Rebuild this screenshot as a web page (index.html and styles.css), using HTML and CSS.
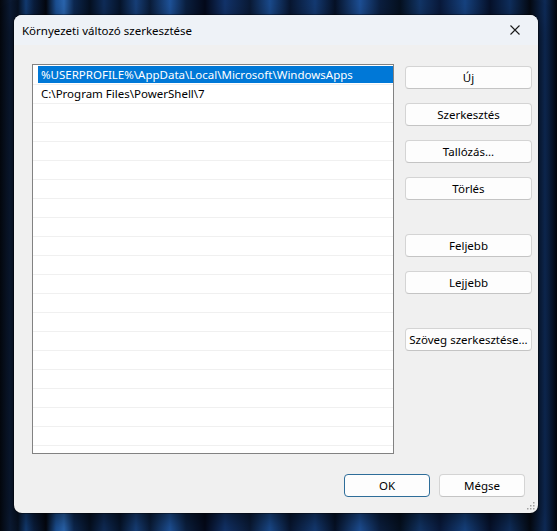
FILE: index.html
```html
<!DOCTYPE html>
<html lang="hu">

<head>
  <meta charset="UTF-8">
  <meta name="viewport" content="width=device-width, initial-scale=1.0">
  <title>Környezeti változó szerkesztése</title>
  <link rel="stylesheet" href="styles.css">
</head>

<body>
  <div class="dialog">
    <header class="titlebar">
      <span class="title">Környezeti változó szerkesztése</span>
      <button class="close" aria-label="Bezárás">
        <svg width="10" height="10" viewBox="0 0 10 10">
          <path d="M0.5 0.5 L9.5 9.5 M9.5 0.5 L0.5 9.5" stroke="#1a1a1a" stroke-width="1.1" fill="none" />
        </svg>
      </button>
    </header>

    <div class="content">
      <div class="main">
        <div class="list">
          <div class="row"><div class="item selected">%USERPROFILE%\AppData\Local\Microsoft\WindowsApps</div></div>
          <div class="row"><div class="item">C:\Program Files\PowerShell\7</div></div>
          <div class="row"></div>
          <div class="row"></div>
          <div class="row"></div>
          <div class="row"></div>
          <div class="row"></div>
          <div class="row"></div>
          <div class="row"></div>
          <div class="row"></div>
          <div class="row"></div>
          <div class="row"></div>
          <div class="row"></div>
          <div class="row"></div>
          <div class="row"></div>
          <div class="row"></div>
          <div class="row"></div>
          <div class="row"></div>
          <div class="row"></div>
          <div class="row"></div>
          <div class="row"></div>
        </div>

        <div class="actions">
          <div class="group">
            <button class="btn">Új</button>
            <button class="btn">Szerkesztés</button>
            <button class="btn">Tallózás...</button>
            <button class="btn">Törlés</button>
          </div>
          <div class="group">
            <button class="btn">Feljebb</button>
            <button class="btn">Lejjebb</button>
          </div>
          <div class="group">
            <button class="btn">Szöveg szerkesztése...</button>
          </div>
        </div>
      </div>

      <footer class="footer">
        <button class="btn btn-wide btn-default">OK</button>
        <button class="btn btn-wide">Mégse</button>
      </footer>
    </div>

    <svg class="grip" width="8" height="8" viewBox="0 0 8 8">
      <rect x="6" y="0" width="1.5" height="1.5" fill="#a0a0a0" />
      <rect x="3" y="3" width="1.5" height="1.5" fill="#a0a0a0" />
      <rect x="6" y="3" width="1.5" height="1.5" fill="#a0a0a0" />
      <rect x="0" y="6" width="1.5" height="1.5" fill="#a0a0a0" />
      <rect x="3" y="6" width="1.5" height="1.5" fill="#a0a0a0" />
      <rect x="6" y="6" width="1.5" height="1.5" fill="#a0a0a0" />
    </svg>
  </div>
</body>

</html>
```

FILE: styles.css
```css
html,
body {
  margin: 0;
  height: 100%;
}

body {
  font-family: "Noto Sans", "Open Sans", sans-serif;
  font-size: 11.5px;
  color: #000;
  padding: 15px 0 0 14px;
  box-sizing: border-box;
  overflow: hidden;
  background:
    linear-gradient(90deg,
      #04070d 0px, #0b1a33 10px, #061020 18px, #123a70 26px, #0a1d3c 34px,
      #04070f 46px, #1b4f92 56px, #2a64ad 64px, #0d2850 74px, #051021 90px,
      #0f2c58 104px, #06142a 120px, #173f78 136px, #0a1c38 150px, #1e5299 170px,
      #0b2040 186px, #04091a 205px, #12336a 225px, #0a1a35 250px, #1a4a8c 270px,
      #081630 290px, #143a72 315px, #061126 335px, #1d4f95 360px, #0b1f40 380px,
      #05101f 400px, #123566 420px, #09193a 440px, #16427f 465px, #06112a 490px,
      #0f2e5c 510px, #040912 530px, #0e2a56 545px, #02060c 557px);
}

.dialog {
  position: relative;
  width: 524px;
  height: 498px;
  background: #f0f0f0;
  border-radius: 8px;
  overflow: hidden;
  box-shadow: 0 0 0 1px rgba(0, 0, 0, 0.35), 0 6px 18px rgba(0, 0, 0, 0.5);
}

.titlebar {
  height: 30px;
  display: flex;
  align-items: center;
  justify-content: space-between;
  background: #eef2f7;
  padding-left: 8px;
}

.title {
  font-size: 11.5px;
}

.close {
  width: 40px;
  height: 30px;
  border: 0;
  background: none;
  display: flex;
  align-items: center;
  justify-content: center;
  padding: 0 6px 0 0;
}

.content {
  padding: 19px 6px 16px 18px;
}

.main {
  display: flex;
  gap: 11px;
}

.list {
  width: 362px;
  height: 390px;
  box-sizing: border-box;
  border: 1px solid #828282;
  background: #fff;
  overflow: hidden;
}

.row {
  height: 19px;
  box-sizing: border-box;
  border-bottom: 1px solid #f0f0f0;
  padding-left: 5px;
}

.item {
  height: 18px;
  line-height: 17px;
  padding-left: 3px;
  white-space: nowrap;
}

.item.selected {
  margin-top: 1px;
  height: 17px;
  background: #0078d7;
  color: #fff;
}

.actions {
  display: flex;
  flex-direction: column;
  gap: 34px;
  padding-top: 2px;
}

.group {
  display: flex;
  flex-direction: column;
  gap: 14px;
}

.btn {
  width: 127px;
  height: 23px;
  box-sizing: border-box;
  font-family: inherit;
  font-size: 11.5px;
  color: #000;
  background: #fdfdfd;
  border: 1px solid #d4d4d4;
  border-bottom-color: #c4c4c4;
  border-radius: 4px;
  padding: 0;
}

.footer {
  display: flex;
  justify-content: flex-end;
  gap: 9px;
  margin-top: 20px;
  padding-right: 7px;
}

.btn-wide {
  width: 86px;
}

.btn-default {
  border: 1px solid #2e6d99;
}

.grip {
  position: absolute;
  right: 3px;
  bottom: 3px;
}
```
